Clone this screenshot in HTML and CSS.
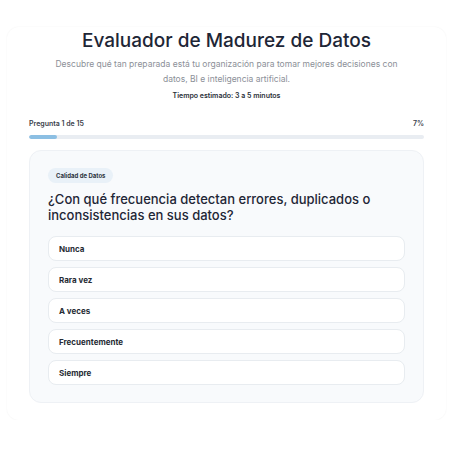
FILE: index.html
```html
<!DOCTYPE html>
<html lang="es">
<head>
    <meta charset="utf-8">
    <title>Evaluador de Madurez de Datos</title>
    <link rel="stylesheet" href="styles.css">
</head>
<body>
<main class="page">
    <div class="shell">
        <!-- cabecera -->
        <header class="intro">
            <h1 class="intro-title">Evaluador de Madurez de Datos</h1>
            <p class="intro-text">Descubre qué tan preparada está tu organización para tomar mejores decisiones con datos, BI e inteligencia artificial.</p>
            <p class="intro-time">Tiempo estimado: 3 a 5 minutos</p>
        </header>

        <!-- progreso -->
        <div class="progress">
            <div class="progress-head">
                <span>Pregunta 1 de 15</span>
                <span>7%</span>
            </div>
            <div class="progress-track">
                <div class="progress-fill" style="width: 7%"></div>
            </div>
        </div>

        <!-- pregunta actual -->
        <section class="question">
            <span class="question-tag">Calidad de Datos</span>
            <h2 class="question-title">¿Con qué frecuencia detectan errores, duplicados o inconsistencias en sus datos?</h2>
            <div class="options">
                <button class="option">Nunca</button>
                <button class="option">Rara vez</button>
                <button class="option">A veces</button>
                <button class="option">Frecuentemente</button>
                <button class="option">Siempre</button>
            </div>
        </section>
    </div>
</main>
</body>
</html>
```

FILE: styles.css
```css
* {
    margin: 0;
    padding: 0;
    box-sizing: border-box;
}

body {
    background-color: #fff;
    font-family: Inter, "Noto Sans", sans-serif;
    color: #1f2633;
}

.page {
    padding: 27px 4px 0 7px;
}

/* tarjeta exterior */
.shell {
    background-color: #fff;
    border-radius: 12px;
    box-shadow: 0 0 2px rgba(15, 23, 42, 0.06);
    padding: 2px 22px 17px;
}

/* cabecera */
.intro {
    text-align: center;
}

.intro-title {
    font-size: 19px;
    line-height: 24px;
    font-weight: 500;
    color: #1e2636;
}

.intro-text {
    margin: 4px auto 0;
    width: 360px;
    font-size: 8.5px;
    line-height: 15px;
    color: #8c9098;
}

.intro-time {
    margin-top: 3px;
    font-size: 7px;
    line-height: 12px;
    font-weight: 600;
    color: #2a2f38;
}

/* barra de progreso */
.progress {
    margin-top: 16px;
}

.progress-head {
    display: flex;
    justify-content: space-between;
    font-size: 7px;
    line-height: 12px;
    font-weight: 600;
    color: #3a404a;
}

.progress-track {
    margin-top: 5px;
    height: 4px;
    border-radius: 4px;
    background-color: #e9edf2;
    overflow: hidden;
}

.progress-fill {
    height: 100%;
    border-radius: 4px;
    background-color: #8cbfe3;
}

/* pregunta */
.question {
    margin-top: 11px;
    padding: 17px 18px 17px;
    display: flex;
    flex-direction: column;
    align-items: flex-start;
    background-color: #f8fafc;
    border: 1px solid #eef1f5;
    border-radius: 12px;
}

.question-tag {
    height: 15px;
    padding: 0 8px;
    border-radius: 8px;
    background-color: #e9f1f8;
    font-size: 6px;
    line-height: 15px;
    font-weight: 700;
    color: #2c3440;
}

.question-title {
    margin-top: 8px;
    font-size: 13px;
    line-height: 16px;
    font-weight: 500;
    color: #1e2636;
}

.options {
    margin-top: 13px;
    align-self: stretch;
    display: flex;
    flex-direction: column;
    gap: 6px;
}

.option {
    height: 25px;
    padding: 0 10px;
    text-align: left;
    background-color: #fff;
    border: 1px solid #e8ecf0;
    border-radius: 8px;
    font-family: inherit;
    font-size: 8px;
    font-weight: 700;
    color: #262b33;
}
```
